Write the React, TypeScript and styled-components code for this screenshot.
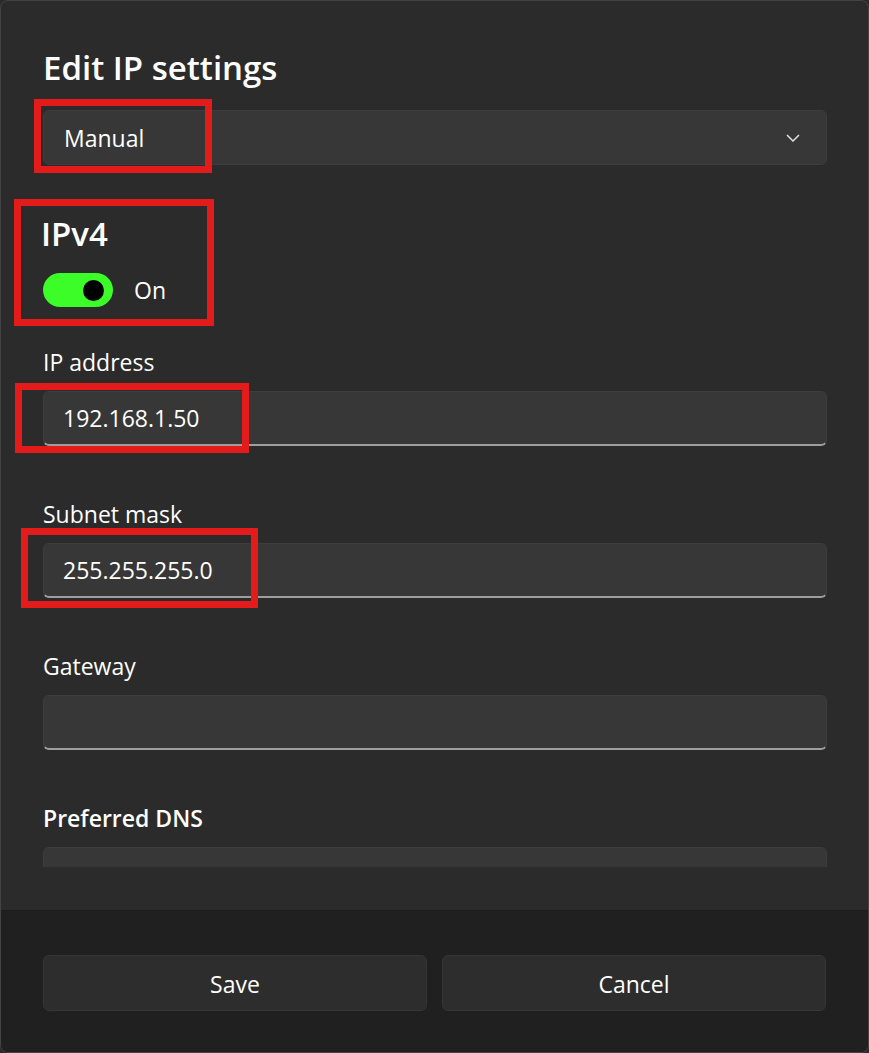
import React from "react";
import styled, { createGlobalStyle } from "styled-components";

const colors = {
  page: "#2b2b2b",
  dialog: "#2b2b2b",
  footer: "#202020",
  field: "#373737",
  fieldBorder: "#3d3d3d",
  underline: "#9e9e9e",
  button: "#2d2d2d",
  buttonBorder: "#353535",
  text: "#ffffff",
  toggle: "#3cfd27",
  mark: "#e31b1b",
};

const font = `"Segoe UI", "Open Sans", "Noto Sans", sans-serif`;

const GlobalStyle = createGlobalStyle`
  html, body {
    margin: 0;
    padding: 0;
    background: ${colors.page};
  }
  * {
    box-sizing: border-box;
  }
`;

const StyledDialog = styled.div`
  display: flex;
  flex-direction: column;
  height: 100vh;
  background: ${colors.dialog};
  border: 1px solid #434343;
  border-radius: 8px;
  overflow: hidden;
  color: ${colors.text};
  font-family: ${font};
`;

const StyledBody = styled.div`
  flex: 1;
  min-height: 0;
  display: flex;
  flex-direction: column;
  padding: 47px 0 43px 0;
`;

const StyledTitle = styled.h1`
  margin: 0;
  padding-left: 42px;
  font-size: 33px;
  line-height: 40px;
  font-weight: 600;
`;

const StyledScroll = styled.div`
  flex: 1;
  min-height: 0;
  overflow: hidden;
  padding: 22px 41px 0 42px;
`;

const StyledMarked = styled.div`
  position: relative;
`;

const StyledMark = styled.span<{ $top: number; $left: number; $w: number; $h: number }>`
  position: absolute;
  top: ${(p) => p.$top}px;
  left: ${(p) => p.$left}px;
  width: ${(p) => p.$w}px;
  height: ${(p) => p.$h}px;
  border: 7px solid ${colors.mark};
  pointer-events: none;
`;

const StyledSelect = styled.div`
  display: flex;
  align-items: center;
  justify-content: space-between;
  height: 55px;
  padding: 0 26px 0 20px;
  background: ${colors.field};
  border: 1px solid ${colors.fieldBorder};
  border-radius: 6px;
  font-size: 23px;
`;

const StyledSection = styled.h2`
  margin: 49px 0 0 -2px;
  font-size: 33px;
  line-height: 40px;
  font-weight: 600;
`;

const StyledToggleRow = styled.div`
  display: flex;
  align-items: center;
  gap: 21px;
  margin-top: 19px;
  font-size: 23px;
`;

const StyledTrack = styled.span`
  display: flex;
  align-items: center;
  justify-content: flex-end;
  width: 70px;
  height: 34px;
  padding-right: 9px;
  border-radius: 17px;
  background: ${colors.toggle};
`;

const StyledKnob = styled.span`
  width: 21px;
  height: 21px;
  border-radius: 50%;
  background: #000;
`;

const StyledField = styled.div<{ $gap: number }>`
  margin-top: ${(p) => p.$gap}px;
`;

const StyledLabel = styled.div<{ $strong?: boolean }>`
  font-size: 23px;
  line-height: 30px;
  font-weight: ${(p) => (p.$strong ? 600 : 400)};
  margin-bottom: 14px;
`;

const StyledInput = styled.div<{ $underline?: boolean }>`
  display: flex;
  align-items: center;
  height: 55px;
  padding: 0 19px;
  background: ${colors.field};
  border: 1px solid ${colors.fieldBorder};
  border-bottom: 2px solid ${(p) => (p.$underline ? colors.underline : colors.fieldBorder)};
  border-radius: 6px;
  font-size: 23px;
`;

const StyledFooter = styled.footer`
  display: grid;
  grid-template-columns: 1fr 1fr;
  gap: 15px;
  height: 142px;
  padding: 44px 42px 0 42px;
  background: ${colors.footer};
  border-top: 1px solid #1c1c1c;
`;

const StyledButton = styled.button`
  height: 56px;
  padding: 2px 0 0;
  background: ${colors.button};
  border: 1px solid ${colors.buttonBorder};
  border-radius: 6px;
  color: ${colors.text};
  font-family: ${font};
  font-size: 23px;
`;

const Chevron = () => (
  <svg width="14" height="8" viewBox="0 0 14 8" fill="none">
    <polyline points="1,1 7,7 13,1" stroke="#e0e0e0" strokeWidth="1.5" />
  </svg>
);

const App = () => {
  return (
    <>
      <GlobalStyle />
      <StyledDialog>
        <StyledBody>
          <StyledTitle>Edit IP settings</StyledTitle>
          <StyledScroll>
            <StyledMarked>
              <StyledSelect>
                <span>Manual</span>
                <Chevron />
              </StyledSelect>
              <StyledMark $top={-11} $left={-9} $w={178} $h={74} />
            </StyledMarked>

            <StyledMarked>
              <StyledSection>IPv4</StyledSection>
              <StyledToggleRow>
                <StyledTrack>
                  <StyledKnob />
                </StyledTrack>
                <span>On</span>
              </StyledToggleRow>
              <StyledMark $top={-15} $left={-29} $w={200} $h={127} />
            </StyledMarked>

            <StyledField $gap={40}>
              <StyledLabel>IP address</StyledLabel>
              <StyledMarked>
                <StyledInput $underline>192.168.1.50</StyledInput>
                <StyledMark $top={-8} $left={-28} $w={234} $h={70} />
              </StyledMarked>
            </StyledField>

            <StyledField $gap={53}>
              <StyledLabel>Subnet mask</StyledLabel>
              <StyledMarked>
                <StyledInput $underline>255.255.255.0</StyledInput>
                <StyledMark $top={-15} $left={-22} $w={237} $h={80} />
              </StyledMarked>
            </StyledField>

            <StyledField $gap={53}>
              <StyledLabel>Gateway</StyledLabel>
              <StyledInput $underline />
            </StyledField>

            <StyledField $gap={53}>
              <StyledLabel $strong>Preferred DNS</StyledLabel>
              <StyledInput />
            </StyledField>
          </StyledScroll>
        </StyledBody>
        <StyledFooter>
          <StyledButton>Save</StyledButton>
          <StyledButton>Cancel</StyledButton>
        </StyledFooter>
      </StyledDialog>
    </>
  );
};

export default App;
